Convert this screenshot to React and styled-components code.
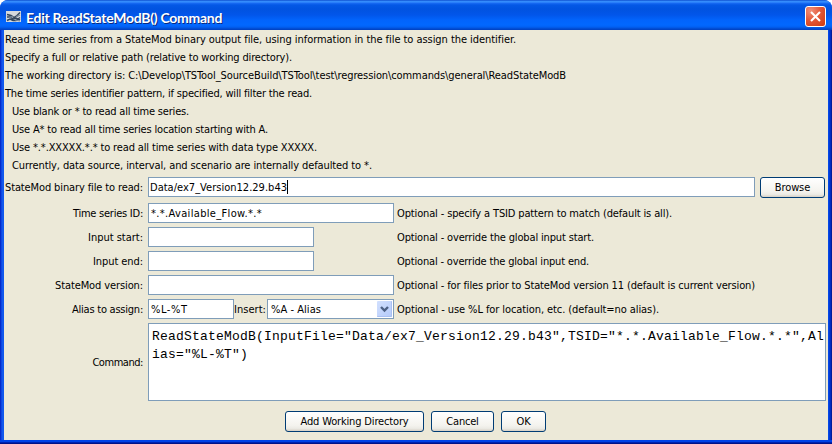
import React from 'react';
import styled, { createGlobalStyle } from 'styled-components';

const GlobalStyle = createGlobalStyle`
  * { box-sizing: border-box; }
  body { margin: 0; background: #fff; overflow: hidden; }
`;

const Window = styled.div`
  width: 832px;
  height: 444px;
  display: flex;
  flex-direction: column;
  border-radius: 8px 8px 0 0;
  overflow: hidden;
  background: #0a4fe4;
  color: #000;
  font: 11px/18px "DejaVu Sans Condensed", "DejaVu Sans", sans-serif;
  white-space: nowrap;
`;

const TitleBar = styled.header`
  height: 30px;
  flex: none;
  display: flex;
  align-items: center;
  padding: 3px 6px 0;
  background: linear-gradient(
    #0842c4 0, #2f86f8 1px, #3a92ff 2px, #1a6cf4 3px, #0458e6 5px,
    #0153e0 9px, #0256ea 15px, #0264fc 20px, #0268ff 25px, #0260f2 27px,
    #0148cc 29px, #0140c0 30px
  );
`;

const Title = styled.h1`
  flex: 1;
  margin: 2px 0 0 4px;
  color: #fff;
  font: 700 14px/20px Lato, "Open Sans", sans-serif;
  letter-spacing: -0.27px;
  text-shadow: 1px 1px 0 #0a2a80;
`;

const CloseButton = styled.button`
  width: 21px;
  height: 21px;
  padding: 0;
  display: grid;
  place-items: center;
  border: 1px solid #fff;
  border-radius: 3px;
  background: radial-gradient(circle at 25% 20%, #f0907a 0, #e3583a 45%, #cf3a10 100%);
`;

const Frame = styled.div`
  flex: 1;
  display: flex;
  padding: 0 4px 4px;
  background: linear-gradient(90deg, #0018b8 0, #0a3ede 1px, #1660f0 3px, #0a50ec 4px, #0a50ec 828px, #0040e0 829px, #0026b4 831px, #001480 832px);
  box-shadow: inset 0 -1px 0 #001288, inset 0 -2px 0 #0022b0, inset 0 -4px 0 #0042e6;
`;

const Body = styled.main`
  flex: 1;
  display: flex;
  flex-direction: column;
  background: #ece9d8;
`;

const Text = styled.span`
  letter-spacing: ${(p) => p.$spacing || 0}px;
`;

const Notes = styled.section`
  display: flex;
  flex-direction: column;
  height: 147px;
  padding: 1px 0 0 1px;
`;

const Note = styled.div`
  height: 18px;
  flex: none;
  padding-left: ${(p) => (p.$indent ? 7 : 0)}px;
`;

const Row = styled.div`
  display: flex;
  align-items: flex-start;
  height: ${(p) => p.$height || 24}px;
  flex: none;
`;

const Label = styled.label`
  width: 144px;
  flex: none;
  padding: 1px 5px 0 0;
  text-align: right;
  line-height: ${(p) => p.$line || 20}px;
`;

const Controls = styled.div`
  width: 249px;
  flex: none;
  display: flex;
  line-height: 20px;
`;

const Field = styled.div`
  width: ${(p) => p.$width}px;
  height: 20px;
  flex: none;
  display: flex;
  align-items: center;
  padding: 0 1px 0 ${(p) => p.$inset || 2}px;
  border: 1px solid #7f9db9;
  background: #fff;
  line-height: 18px;

  & > ${Text} {
    padding-top: 1px;
  }
`;

const Caret = styled.i`
  width: 1px;
  height: 14px;
  background: #000;
`;

const InsertLabel = styled.span`
  width: 33px;
  flex: none;
  padding-top: 1px;
`;

const ComboValue = styled.span`
  flex: 1;
  padding-top: 1px;
`;

const ComboArrow = styled.span`
  width: 15px;
  height: 16px;
  display: grid;
  place-items: center;
  border-radius: 1px;
  background: linear-gradient(135deg, #d2e0fe, #b4cafa);
  box-shadow: inset -1px -1px 0 #a9c0f2;
`;

const Hint = styled.span`
  padding-top: 1px;
  line-height: 20px;
`;

const Button = styled.button`
  width: ${(p) => p.$width}px;
  height: 21px;
  padding: 0;
  margin-left: ${(p) => p.$gap || 0}px;
  border: 1px solid #003c74;
  border-radius: 3px;
  background: linear-gradient(#fff, #f4f3ee 70%, #ecebe5 86%, #d6d0c5);
  color: #000;
  font: inherit;
  line-height: 18px;
  letter-spacing: ${(p) => p.$spacing}px;
`;

const CommandArea = styled.div`
  width: 678px;
  height: 78px;
  padding: 4px 3px;
  border: 1px solid #7f9db9;
  background: #fff;
  font: 13px/18px "Liberation Mono", monospace;
  letter-spacing: 0.199px;
`;

const Footer = styled.footer`
  display: flex;
  justify-content: center;
  gap: 7px;
  padding: 10px 1px 0 0;
`;

const notes = [
  ['Read time series from a StateMod binary output file, using information in the file to assign the identifier.', -0.053],
  ['Specify a full or relative path (relative to working directory).', -0.158],
  ['The working directory is: C:\\Develop\\TSTool_SourceBuild\\TSTool\\test\\regression\\commands\\general\\ReadStateModB', -0.094],
  ['The time series identifier pattern, if specified, will filter the read.', -0.185],
  ['Use blank or * to read all time series.', -0.189, true],
  ['Use A* to read all time series location starting with A.', -0.168, true],
  ['Use *.*.XXXXX.*.* to read all time series with data type XXXXX.', -0.143, true],
  ['Currently, data source, interval, and scenario are internally defaulted to *.', -0.1, true],
];

const WindowIcon = () => (
  <svg width="16" height="16" viewBox="0 0 16 16">
    <rect y="2" width="15" height="11" fill="#d5d8dc" />
    <path d="M1 5.500l4 1 3 2 3-2 3-3M1 8h3l3 2 3-1 4 2M1 11.500l3-1.500 3 1.500h3l4-3" fill="none" stroke="#35465c" strokeWidth="1.4" />
    <path d="M10 8l4-2M3 9l4-2M9 11l5 1" stroke="#76879c" strokeWidth="1.200" />
  </svg>
);

const CloseIcon = () => (
  <svg width="13" height="13" viewBox="0 0 13 13">
    <path d="M2 2l9 9M11 2l-9 9" stroke="#fff" strokeWidth="2.1" />
  </svg>
);

const ArrowIcon = () => (
  <svg width="9" height="8" viewBox="0 0 9 8">
    <path d="M1 2l3.500 3.500L8 2" fill="none" stroke="#4d6185" strokeWidth="2.4" />
  </svg>
);

function FormRow({ label, spacing, hint, hintSpacing, children }) {
  return (
    <Row>
      <Label><Text $spacing={spacing}>{label}</Text></Label>
      <Controls>{children}</Controls>
      <Hint><Text $spacing={hintSpacing}>{hint}</Text></Hint>
    </Row>
  );
}

export default function App() {
  return (
    <>
      <GlobalStyle />
      <Window>
        <TitleBar>
          <WindowIcon />
          <Title>Edit ReadStateModB() Command</Title>
          <CloseButton aria-label="Close"><CloseIcon /></CloseButton>
        </TitleBar>
        <Frame>
          <Body>
            <Notes>
              {notes.map(([text, spacing, indent]) => (
                <Note key={text} $indent={indent}><Text $spacing={spacing}>{text}</Text></Note>
              ))}
            </Notes>
            <Row $height={26}>
              <Label><Text $spacing={-0.122}>StateMod binary file to read:</Text></Label>
              <Field $width={607} $inset={1}>
                <Text $spacing={0.016}>Data/ex7_Version12.29.b43</Text>
                <Caret />
              </Field>
              <Button $width={65} $gap={5} $spacing={-0.12}>Browse</Button>
            </Row>
            <FormRow label="Time series ID:" spacing={-0.244} hint="Optional - specify a TSID pattern to match (default is all)." hintSpacing={-0.139}>
              <Field $width={246}><Text $spacing={0.335}>*.*.Available_Flow.*.*</Text></Field>
            </FormRow>
            <FormRow label="Input start:" spacing={-0.013} hint="Optional - override the global input start." hintSpacing={-0.149}>
              <Field $width={166} />
            </FormRow>
            <FormRow label="Input end:" spacing={-0.077} hint="Optional - override the global input end." hintSpacing={-0.171}>
              <Field $width={166} />
            </FormRow>
            <FormRow label="StateMod version:" spacing={-0.106} hint="Optional - for files prior to StateMod version 11 (default is current version)" hintSpacing={-0.133}>
              <Field $width={246} />
            </FormRow>
            <FormRow label="Alias to assign:" spacing={-0.233} hint="Optional - use %L for location, etc. (default=no alias)." hintSpacing={-0.083}>
              <Field $width={86}><Text $spacing={0.55}>%L-%T</Text></Field>
              <InsertLabel><Text $spacing={0.04}>Insert:</Text></InsertLabel>
              <Field $width={127} $inset={3}>
                <ComboValue><Text $spacing={0.042}>%A - Alias</Text></ComboValue>
                <ComboArrow><ArrowIcon /></ComboArrow>
              </Field>
            </FormRow>
            <Row $height={78}>
              <Label $line={78}><Text $spacing={-0.45}>Command:</Text></Label>
              <CommandArea>
                ReadStateModB(InputFile="Data/ex7_Version12.29.b43",TSID="*.*.Available_Flow.*.*",Al
                <br />
                ias="%L-%T")
              </CommandArea>
            </Row>
            <Footer>
              <Button $width={139} $spacing={-0.158}>Add Working Directory</Button>
              <Button $width={63} $spacing={-0.2}>Cancel</Button>
              <Button $width={45} $spacing={-0.1}>OK</Button>
            </Footer>
          </Body>
        </Frame>
      </Window>
    </>
  );
}
